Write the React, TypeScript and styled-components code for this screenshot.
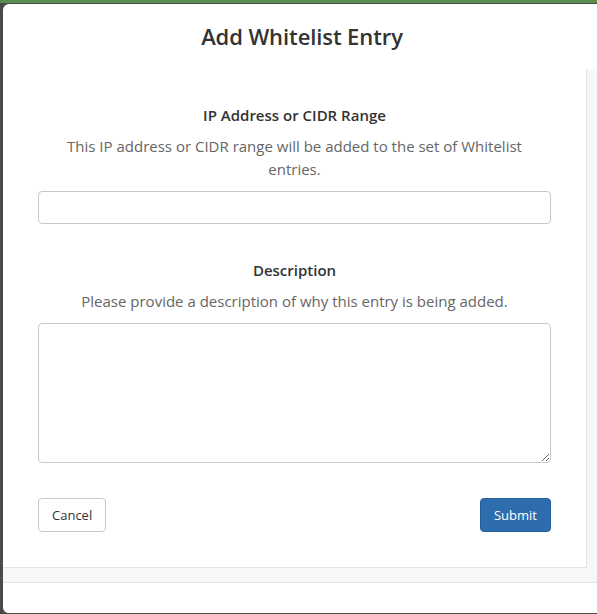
import React from "react";
import styled, { createGlobalStyle } from "styled-components";

const Global = createGlobalStyle`
  html, body { margin: 0; padding: 0; }
  body {
    background: #4a4a4a;
    font-family: "Open Sans", "Liberation Sans", sans-serif;
    overflow: hidden;
    width: 597px;
    height: 614px;
  }
`;

const Page = styled.div`
  height: 614px;
  display: flex;
  flex-direction: column;
  border-top: 3px solid #5b8e4c;
  box-sizing: border-box;
`;

const Modal = styled.div`
  margin: 1px 0 1px 3px;
  width: 598px;
  flex: 1;
  background: #fff;
  border-radius: 6px 0 0 6px;
  display: flex;
  flex-direction: column;
  overflow: hidden;
`;

const Header = styled.div`
  height: 65px;
  display: flex;
  align-items: center;
  justify-content: center;
  padding-bottom: 2px;
  box-sizing: border-box;
`;

const Title = styled.h2`
  margin: 0;
  font-size: 22px;
  font-weight: 600;
  color: #333;
  letter-spacing: -0.1px;
`;

const Body = styled.div`
  background: #f7f7f7;
  padding: 0 14px 14px 0;
  border-bottom: 1px solid #e2e2e2;
`;

const Card = styled.form`
  background: #fff;
  border-right: 1px solid #e4e4e4;
  border-bottom: 1px solid #e4e4e4;
  padding: 36px 35px 35px;
  display: flex;
  flex-direction: column;
`;

const Field = styled.div<{ $spaced?: boolean }>`
  display: flex;
  flex-direction: column;
  align-items: center;
  margin-top: ${(p) => (p.$spaced ? "36px" : "0")};
`;

const Label = styled.label`
  font-size: 15px;
  font-weight: 600;
  color: #333;
  line-height: 20px;
  margin-bottom: 10px;
`;

const Help = styled.p`
  margin: 0 0 10px;
  font-size: 15px;
  line-height: 23px;
  color: #666;
  text-align: center;
`;

const Input = styled.input`
  width: 100%;
  height: 33px;
  box-sizing: border-box;
  border: 1px solid #c8c8c8;
  border-radius: 4px;
  background: #fff;
  font-family: inherit;
`;

const TextArea = styled.textarea`
  width: 100%;
  height: 140px;
  box-sizing: border-box;
  border: 1px solid #c8c8c8;
  border-radius: 4px;
  background: #fff;
  font-family: inherit;
  display: block;
`;

const Actions = styled.div`
  display: flex;
  justify-content: space-between;
  margin-top: 35px;
`;

const Button = styled.button<{ $primary?: boolean }>`
  height: 34px;
  padding: 0 13px 1px;
  font-family: inherit;
  font-size: 13px;
  border-radius: 4px;
  border: 1px solid ${(p) => (p.$primary ? "#25609b" : "#c8c8c8")};
  background: ${(p) => (p.$primary ? "#2e6dad" : "#fff")};
  color: ${(p) => (p.$primary ? "#fff" : "#333")};
  cursor: pointer;
`;

const Footer = styled.div`
  flex: 1;
  background: #fff;
`;

export default function App() {
  return (
    <>
      <Global />
      <Page>
        <Modal>
          <Header>
            <Title>Add Whitelist Entry</Title>
          </Header>
          <Body>
            <Card onSubmit={(e) => e.preventDefault()}>
              <Field>
                <Label>IP Address or CIDR Range</Label>
                <Help>
                  This IP address or CIDR range will be added to the set of Whitelist
                  <br />
                  entries.
                </Help>
                <Input type="text" />
              </Field>
              <Field $spaced>
                <Label>Description</Label>
                <Help>Please provide a description of why this entry is being added.</Help>
                <TextArea />
              </Field>
              <Actions>
                <Button type="button">Cancel</Button>
                <Button type="submit" $primary>
                  Submit
                </Button>
              </Actions>
            </Card>
          </Body>
          <Footer />
        </Modal>
      </Page>
    </>
  );
}
